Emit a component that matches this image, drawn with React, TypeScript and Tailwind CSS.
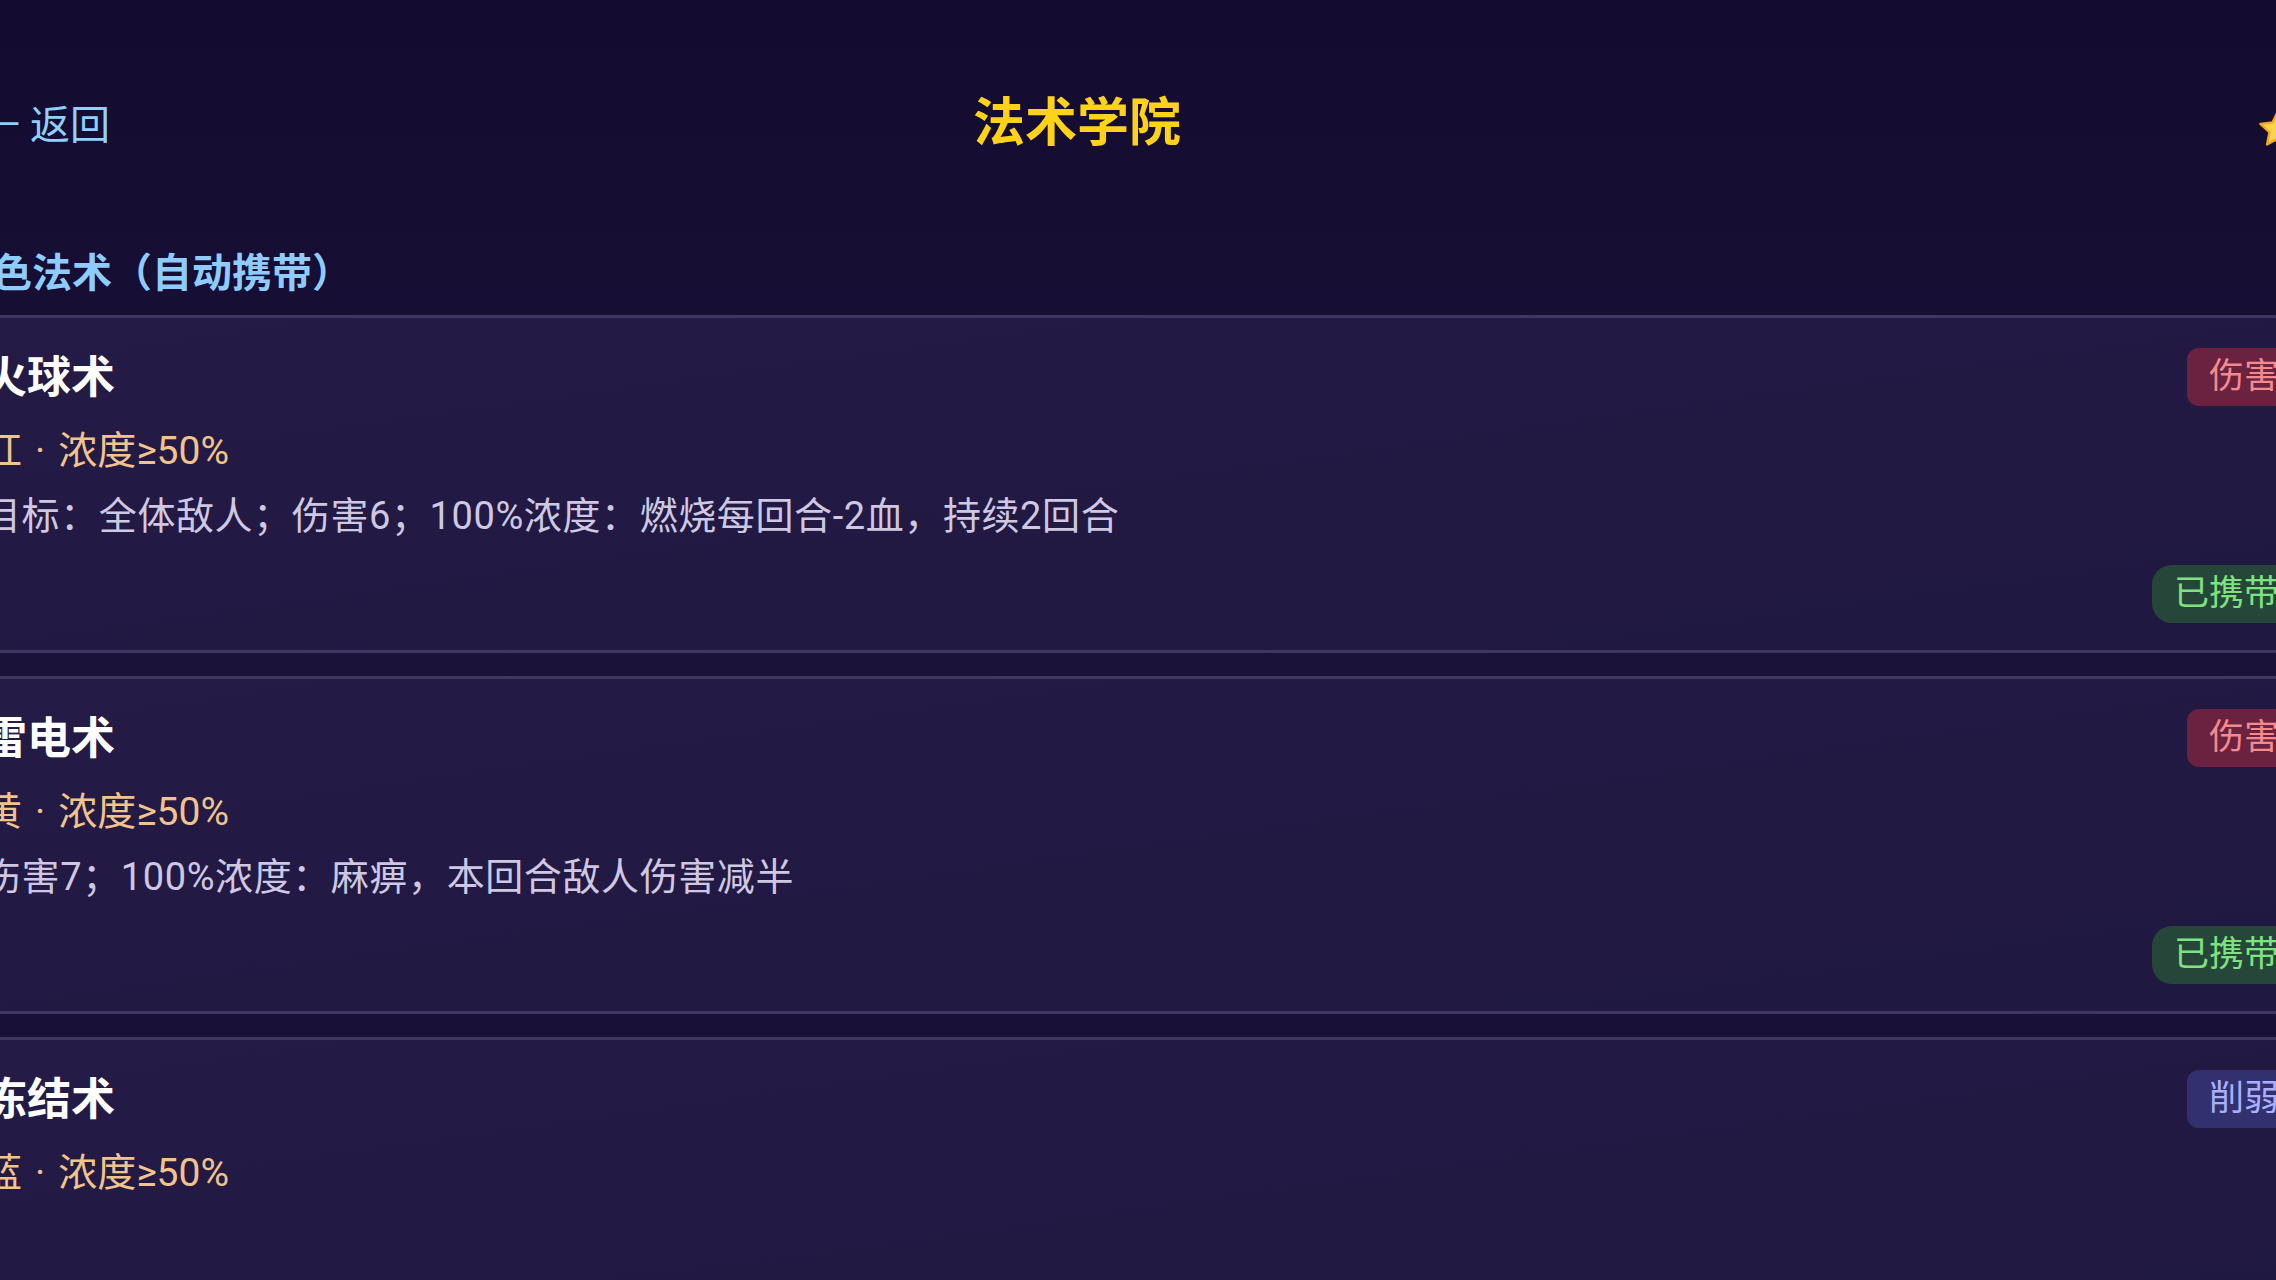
import React from "react";

type Spell = {
  name: string;
  color: string;
  req: string;
  desc: string;
  tag: string;
  tagTone: "damage" | "debuff";
  carried: boolean;
};

const spells: Spell[] = [
  {
    name: "火球术",
    color: "红",
    req: "浓度≥50%",
    desc: "目标：全体敌人；伤害6；100%浓度：燃烧每回合-2血，持续2回合",
    tag: "伤害",
    tagTone: "damage",
    carried: true,
  },
  {
    name: "雷电术",
    color: "黄",
    req: "浓度≥50%",
    desc: "伤害7；100%浓度：麻痹，本回合敌人伤害减半",
    tag: "伤害",
    tagTone: "damage",
    carried: true,
  },
  {
    name: "冻结术",
    color: "蓝",
    req: "浓度≥50%",
    desc: "",
    tag: "削弱",
    tagTone: "debuff",
    carried: true,
  },
];

function Star() {
  return (
    <svg width="46" height="46" viewBox="0 0 24 24" className="shrink-0">
      <path
        d="M12 2.6l2.8 5.9 6.4.8-4.7 4.4 1.2 6.4L12 17l-5.7 3.1 1.2-6.4-4.7-4.4 6.4-.8z"
        fill="#fcd34d"
        stroke="#f5a623"
        strokeWidth="1.2"
        strokeLinejoin="round"
      />
    </svg>
  );
}

function SpellCard({ spell }: { spell: Spell }) {
  const tagClass =
    spell.tagTone === "damage"
      ? "bg-[#6a2240] text-[#f38a8e]"
      : "bg-[#333070] text-[#aab0ff]";
  return (
    <div className="rounded-[20px] border-[3px] border-[#3f3664] bg-gradient-to-br from-[#241b46] to-[#1f1840] px-[28px] pt-[30px] pb-[27px]">
      <div className="flex h-[58px] items-center justify-between">
        <div className="pt-[2px] text-[44px] font-bold text-white leading-none">{spell.name}</div>
        <span className={`flex h-[58px] items-center rounded-[12px] px-[22px] text-[35px] ${tagClass}`}>
          {spell.tag}
        </span>
      </div>
      <div className="mt-[19px] h-[52px] text-[39px] leading-[52px] text-[#f3c38c]">
        {spell.color}
        <span className="px-[13px]">·</span>
        {spell.req}
      </div>
      <div className="mt-[13px] h-[52px] text-[38px] tracking-[0.6px] leading-[52px] text-[#cfc8e2]">{spell.desc}</div>
      <div className="mt-[23px] flex justify-end">
        {spell.carried && (
          <span className="flex h-[58px] items-center rounded-[20px] bg-[#26463a] px-[22px] text-[35px] text-[#7de27f]">
            已携带
          </span>
        )}
      </div>
    </div>
  );
}

export default function App() {
  return (
    <div
      className="h-screen w-full overflow-hidden bg-gradient-to-b from-[#140b30] via-[#1a1239] to-[#170e34]"
      style={{ fontFamily: 'Roboto, "Noto Sans CJK SC", sans-serif' }}
    >
      <div className="-ml-[48px] w-[2380px]">
        <header className="flex h-[240px] items-center">
          <div className="w-[1021px] pl-[28px] pt-[12px] text-[40px] text-[#8fd0ff]">
            <span>←</span> 返回
          </div>
          <h1 className="pt-[8px] text-[52px] font-bold text-[#ffd21a]">法术学院</h1>
          <div className="flex flex-1 justify-end pr-[31px] pt-[18px]">
            <Star />
          </div>
        </header>
        <div className="mt-[6px] mb-[13px] h-[56px] text-[40px] font-bold leading-[56px] text-[#8ecbff]">
          角色法术（自动携带）
        </div>
        <div className="flex flex-col gap-[23px]">
          {spells.map((s) => (
            <SpellCard key={s.name} spell={s} />
          ))}
        </div>
      </div>
    </div>
  );
}
